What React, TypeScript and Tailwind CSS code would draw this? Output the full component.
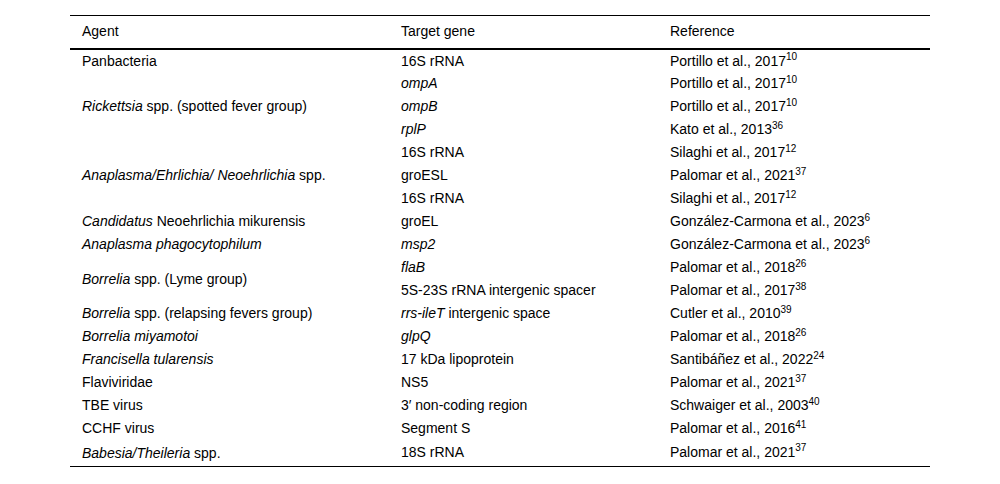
import React from 'react';

type Row = {
    agent?: React.ReactNode;
    span?: number;
    gene: React.ReactNode;
    ref: string;
    sup: string;
};

const rows: Row[] = [
    { agent: 'Panbacteria', gene: '16S rRNA', ref: 'Portillo et al., 2017', sup: '10' },
    { agent: <><i>Rickettsia</i> spp. (spotted fever group)</>, span: 3, gene: <i>ompA</i>, ref: 'Portillo et al., 2017', sup: '10' },
    { gene: <i>ompB</i>, ref: 'Portillo et al., 2017', sup: '10' },
    { gene: <i>rplP</i>, ref: 'Kato et al., 2013', sup: '36' },
    { agent: <><i>Anaplasma/Ehrlichia/ Neoehrlichia</i> spp.</>, span: 3, gene: '16S rRNA', ref: 'Silaghi et al., 2017', sup: '12' },
    { gene: 'groESL', ref: 'Palomar et al., 2021', sup: '37' },
    { gene: '16S rRNA', ref: 'Silaghi et al., 2017', sup: '12' },
    { agent: <><i>Candidatus</i> Neoehrlichia mikurensis</>, gene: 'groEL', ref: 'González-Carmona et al., 2023', sup: '6' },
    { agent: <i>Anaplasma phagocytophilum</i>, gene: <i>msp2</i>, ref: 'González-Carmona et al., 2023', sup: '6' },
    { agent: <><i>Borrelia</i> spp. (Lyme group)</>, span: 2, gene: <i>flaB</i>, ref: 'Palomar et al., 2018', sup: '26' },
    { gene: '5S-23S rRNA intergenic spacer', ref: 'Palomar et al., 2017', sup: '38' },
    { agent: <><i>Borrelia</i> spp. (relapsing fevers group)</>, gene: <><i>rrs-ileT</i> intergenic space</>, ref: 'Cutler et al., 2010', sup: '39' },
    { agent: <i>Borrelia miyamotoi</i>, gene: <i>glpQ</i>, ref: 'Palomar et al., 2018', sup: '26' },
    { agent: <i>Francisella tularensis</i>, gene: '17 kDa lipoprotein', ref: 'Santibáñez et al., 2022', sup: '24' },
    { agent: 'Flaviviridae', gene: 'NS5', ref: 'Palomar et al., 2021', sup: '37' },
    { agent: 'TBE virus', gene: '3′ non-coding region', ref: 'Schwaiger et al., 2003', sup: '40' },
    { agent: 'CCHF virus', gene: 'Segment S', ref: 'Palomar et al., 2016', sup: '41' },
    { agent: <><i>Babesia/Theileria</i> spp.</>, gene: '18S rRNA', ref: 'Palomar et al., 2021', sup: '37' },
];

export default function App() {
    return (
        <div className="w-[1000px] h-[484px] bg-white pt-[15px] text-black text-[14px]" style={{ fontFamily: '"Liberation Sans", Arial, sans-serif' }}>
            <table className="mx-auto w-[860px] table-fixed border-collapse border-t border-b border-black">
                <colgroup>
                    <col className="w-[319px]" />
                    <col className="w-[269px]" />
                    <col className="w-[272px]" />
                </colgroup>
                <thead>
                    <tr className="h-[33px] border-b-2 border-black">
                        <th className="px-3 text-left font-normal align-middle">Agent</th>
                        <th className="px-3 text-left font-normal align-middle">Target gene</th>
                        <th className="px-3 text-left font-normal align-middle">Reference</th>
                    </tr>
                </thead>
                <tbody>
                    {rows.map((r, i) => (
                        <tr key={i} className={i === rows.length - 1 ? 'h-[27px]' : 'h-[23px]'}>
                            {r.agent !== undefined && (
                                <td rowSpan={r.span ?? 1} className="px-3 py-0 align-middle leading-4">{r.agent}</td>
                            )}
                            <td className={`px-3 py-0 leading-4 ${i === rows.length - 1 ? 'align-top pt-[4px]' : 'align-middle'}`}>{r.gene}</td>
                            <td className={`px-3 py-0 leading-4 whitespace-nowrap ${i === rows.length - 1 ? 'align-top pt-[4px]' : 'align-middle'}`}>
                                {r.ref}<sup className="text-[10px] -top-[0.55em]">{r.sup}</sup>
                            </td>
                        </tr>
                    ))}
                </tbody>
            </table>
        </div>
    );
}
